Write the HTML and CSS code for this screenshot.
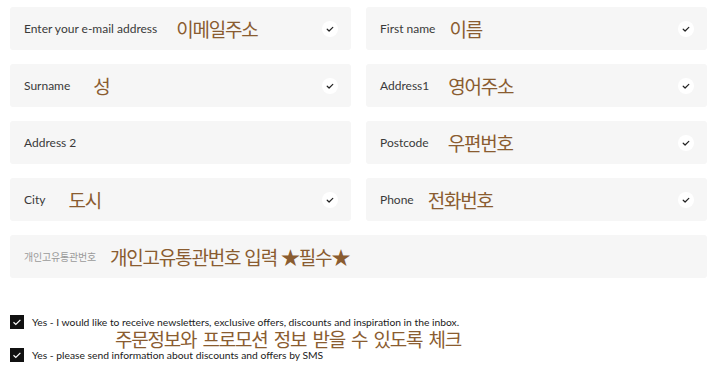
FILE: index.html
```html
<!DOCTYPE html>
<html lang="ko">
<head>
<meta charset="utf-8">
<link rel="stylesheet" href="styles.css">
</head>
<body>
<form class="form">
  <div class="grid">
    <div class="field"><span class="label">Enter your e-mail address</span><span class="note">이메일주소</span><span class="ok"><svg viewBox="0 0 16 16"><path d="M5.2 8.2l1.9 1.8 3.7-3.7"/></svg></span></div>
    <div class="field"><span class="label">First name</span><span class="note note-narrow">이름</span><span class="ok"><svg viewBox="0 0 16 16"><path d="M5.2 8.2l1.9 1.8 3.7-3.7"/></svg></span></div>
    <div class="field"><span class="label">Surname</span><span class="note note-wide">성</span><span class="ok"><svg viewBox="0 0 16 16"><path d="M5.2 8.2l1.9 1.8 3.7-3.7"/></svg></span></div>
    <div class="field"><span class="label">Address1</span><span class="note">영어주소</span><span class="ok"><svg viewBox="0 0 16 16"><path d="M5.2 8.2l1.9 1.8 3.7-3.7"/></svg></span></div>
    <div class="field"><span class="label">Address 2</span></div>
    <div class="field"><span class="label">Postcode</span><span class="note">우편번호</span><span class="ok"><svg viewBox="0 0 16 16"><path d="M5.2 8.2l1.9 1.8 3.7-3.7"/></svg></span></div>
    <div class="field"><span class="label">City</span><span class="note note-wide">도시</span><span class="ok"><svg viewBox="0 0 16 16"><path d="M5.2 8.2l1.9 1.8 3.7-3.7"/></svg></span></div>
    <div class="field"><span class="label">Phone</span><span class="note note-narrow">전화번호</span><span class="ok"><svg viewBox="0 0 16 16"><path d="M5.2 8.2l1.9 1.8 3.7-3.7"/></svg></span></div>
    <div class="field field-full"><span class="label label-ko">개인고유통관번호</span><span class="note note-narrow">개인고유통관번호 입력 ★필수★</span></div>
  </div>
  <div class="checks">
    <label class="check"><span class="box"><svg viewBox="0 0 14 14"><path d="M3.5 7.2l2.3 2.2 4.6-4.6"/></svg></span><span class="check-text">Yes - I would like to receive newsletters, exclusive offers, discounts and inspiration in the inbox.</span></label>
    <div class="check-note">주문정보와 프로모션 정보 받을 수 있도록 체크</div>
    <label class="check"><span class="box"><svg viewBox="0 0 14 14"><path d="M3.5 7.2l2.3 2.2 4.6-4.6"/></svg></span><span class="check-text">Yes - please send information about discounts and offers by SMS</span></label>
  </div>
</form>
</body>
</html>
```

FILE: styles.css
```css
html, body {
  margin: 0;
  padding: 0;
  background: #ffffff;
}
body {
  font-family: "Lato", "Noto Sans CJK KR", sans-serif;
  color: #333333;
}
.form {
  padding: 7px 13px 0 10px;
}
.grid {
  display: grid;
  grid-template-columns: 1fr 1fr;
  column-gap: 15px;
  row-gap: 14px;
}
.field {
  height: 43px;
  background: #f6f6f6;
  border-radius: 3px;
  display: flex;
  align-items: center;
  padding: 0 13px 0 14px;
  box-sizing: border-box;
}
.field-full {
  grid-column: 1 / span 2;
}
.label {
  font-size: 12px;
  color: #3a3a3a;
  white-space: nowrap;
}
.label-ko {
  font-family: "Noto Sans CJK KR", sans-serif;
  font-size: 10px;
  color: #9a9a9a;
  letter-spacing: -0.2px;
}
.note {
  font-family: "Noto Sans CJK KR", sans-serif;
  font-size: 19px;
  letter-spacing: -1.2px;
  color: #8a5c30;
  margin-left: 19px;
  line-height: 1;
  white-space: nowrap;
}
.note-wide {
  margin-left: 23px;
}
.note-narrow {
  margin-left: 14px;
}
.ok {
  margin-left: auto;
  width: 16px;
  height: 16px;
  border-radius: 50%;
  background: #ffffff;
  display: flex;
}
.ok svg {
  width: 16px;
  height: 16px;
  fill: none;
  stroke: #222;
  stroke-width: 1.2;
  stroke-linecap: round;
  stroke-linejoin: round;
}
.checks {
  margin-top: 37px;
  display: flex;
  flex-direction: column;
}
.check {
  display: flex;
  align-items: center;
  height: 14px;
}
.box {
  width: 14px;
  height: 14px;
  background: #111;
  display: flex;
  flex: none;
}
.box svg {
  width: 14px;
  height: 14px;
  fill: none;
  stroke: #ffffff;
  stroke-width: 1.2;
}
.check-text {
  margin-left: 8px;
  font-size: 10.3px;
  color: #1a1a1a;
  white-space: nowrap;
}
.check-note {
  font-family: "Noto Sans CJK KR", sans-serif;
  font-size: 19px;
  letter-spacing: -1.2px;
  word-spacing: 2px;
  color: #8a5c30;
  line-height: 19px;
  margin: 0 0 0 105px;
  height: 19px;
}
```
